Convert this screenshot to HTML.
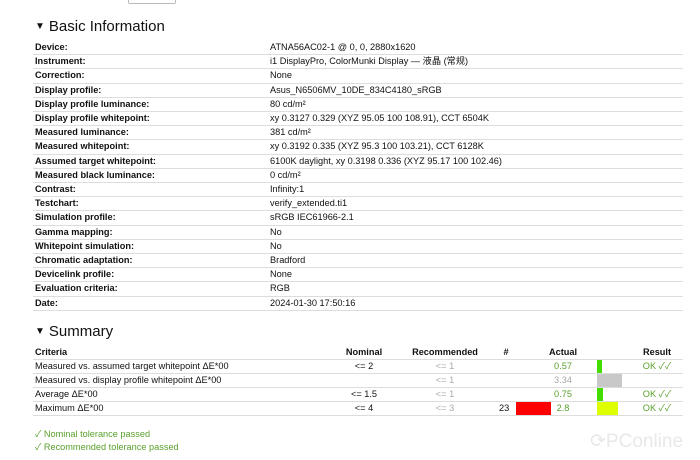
<!DOCTYPE html>
<html><head><meta charset="utf-8"><style>
body{margin:0;width:700px;height:460px;background:#fff;font-family:"Liberation Sans","Noto Sans CJK SC",sans-serif;font-size:9.2px;color:#111;position:relative;overflow:hidden}
.btn{position:absolute;left:128px;top:-6px;width:46px;height:8px;border:1px solid #bbb;border-radius:2px}
h2{position:absolute;margin:0;font-weight:normal;font-size:15px;left:35px}
h2 span{font-size:10px;position:relative;top:-2px;margin-right:4px}
.r{position:absolute;left:33px;width:650px;height:14.2px;border-bottom:1px solid #ddd;box-sizing:border-box;line-height:13px}
.r b{position:absolute;left:2px}
.r i{font-style:normal;position:absolute;left:237px}
.s{position:absolute;left:33px;width:650px;height:14px;border-bottom:1px solid #ddd;box-sizing:border-box;line-height:13px}
.s span{position:absolute;top:0}
.c{text-align:center}
.g{color:#5aa02c}.gr{color:#aaa}
.ok{color:#5aa02c}
</style></head><body>
<div class="btn"></div>
<h2 style="top:18px"><span>▼</span>Basic Information</h2>
<div class="r" style="top:41px"><b>Device:</b><i>ATNA56AC02-1 @ 0, 0, 2880x1620</i></div>
<div class="r" style="top:55.2px"><b>Instrument:</b><i>i1 DisplayPro, ColorMunki Display — 液晶 (常规)</i></div>
<div class="r" style="top:69.4px"><b>Correction:</b><i>None</i></div>
<div class="r" style="top:83.6px"><b>Display profile:</b><i>Asus_N6506MV_10DE_834C4180_sRGB</i></div>
<div class="r" style="top:97.8px"><b>Display profile luminance:</b><i>80 cd/m²</i></div>
<div class="r" style="top:112px"><b>Display profile whitepoint:</b><i>xy 0.3127 0.329 (XYZ 95.05 100 108.91), CCT 6504K</i></div>
<div class="r" style="top:126.2px"><b>Measured luminance:</b><i>381 cd/m²</i></div>
<div class="r" style="top:140.4px"><b>Measured whitepoint:</b><i>xy 0.3192 0.335 (XYZ 95.3 100 103.21), CCT 6128K</i></div>
<div class="r" style="top:154.6px"><b>Assumed target whitepoint:</b><i>6100K daylight, xy 0.3198 0.336 (XYZ 95.17 100 102.46)</i></div>
<div class="r" style="top:168.8px"><b>Measured black luminance:</b><i>0 cd/m²</i></div>
<div class="r" style="top:183px"><b>Contrast:</b><i>Infinity:1</i></div>
<div class="r" style="top:197.2px"><b>Testchart:</b><i>verify_extended.ti1</i></div>
<div class="r" style="top:211.4px"><b>Simulation profile:</b><i>sRGB IEC61966-2.1</i></div>
<div class="r" style="top:225.6px"><b>Gamma mapping:</b><i>No</i></div>
<div class="r" style="top:239.8px"><b>Whitepoint simulation:</b><i>No</i></div>
<div class="r" style="top:254px"><b>Chromatic adaptation:</b><i>Bradford</i></div>
<div class="r" style="top:268.2px"><b>Devicelink profile:</b><i>None</i></div>
<div class="r" style="top:282.4px"><b>Evaluation criteria:</b><i>RGB</i></div>
<div class="r" style="top:296.6px"><b>Date:</b><i>2024-01-30 17:50:16</i></div>

<h2 style="top:323px"><span>▼</span>Summary</h2>
<div class="s" style="top:346px;font-weight:bold">
<span style="left:2px">Criteria</span><span class="c" style="left:300px;width:62px">Nominal</span><span class="c" style="left:375px;width:74px">Recommended</span><span class="c" style="left:466px;width:14px">#</span><span class="c" style="left:505px;width:50px">Actual</span><span class="c" style="left:600px;width:48px">Result</span></div>
<div class="s" style="top:360px"><span style="left:2px">Measured vs. assumed target whitepoint ΔE*00</span><span class="c" style="left:300px;width:62px">&lt;= 2</span><span class="c gr" style="left:375px;width:74px">&lt;= 1</span><span class="c g" style="left:505px;width:50px">0.57</span><span style="left:564px;width:5px;height:13px;background:#44dd00"></span><span class="c ok" style="left:600px;width:48px">OK ✓✓</span></div>
<div class="s" style="top:374px"><span style="left:2px">Measured vs. display profile whitepoint ΔE*00</span><span class="c gr" style="left:375px;width:74px">&lt;= 1</span><span class="c gr" style="left:505px;width:50px">3.34</span><span style="left:564px;width:25px;height:13px;background:#c8c8c8"></span></div>
<div class="s" style="top:388px"><span style="left:2px">Average ΔE*00</span><span class="c" style="left:300px;width:62px">&lt;= 1.5</span><span class="c gr" style="left:375px;width:74px">&lt;= 1</span><span class="c g" style="left:505px;width:50px">0.75</span><span style="left:564px;width:6px;height:13px;background:#44dd00"></span><span class="c ok" style="left:600px;width:48px">OK ✓✓</span></div>
<div class="s" style="top:402px"><span style="left:2px">Maximum ΔE*00</span><span class="c" style="left:300px;width:62px">&lt;= 4</span><span class="c gr" style="left:375px;width:74px">&lt;= 3</span><span style="left:466px">23</span><span style="left:483px;width:35px;height:13px;background:#ff0000"></span><span class="c g" style="left:505px;width:50px">2.8</span><span style="left:564px;width:21px;height:13px;background:#ddff00"></span><span class="c ok" style="left:600px;width:48px">OK ✓✓</span></div>
<div class="ok" style="position:absolute;left:35px;top:426px">✓ Nominal tolerance passed</div>
<div class="ok" style="position:absolute;left:35px;top:439px">✓ Recommended tolerance passed</div>
<div style="position:absolute;left:590px;top:430px;font-size:19px;color:#e8e8e8">⟳PConline</div>
</body></html>
